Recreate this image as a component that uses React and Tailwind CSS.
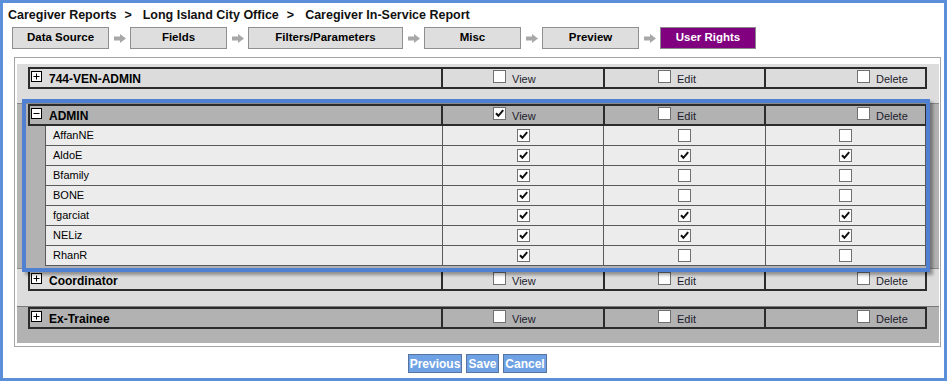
import React from "react";

const tabs = [
  { label: "Data Source", w: "w-[97px]" },
  { label: "Fields", w: "w-[97px]" },
  { label: "Filters/Parameters", w: "w-[155px]" },
  { label: "Misc", w: "w-[97px]" },
  { label: "Preview", w: "w-[97px]" },
  { label: "User Rights", w: "w-[96px]", active: true },
];

const users = [
  { name: "AffanNE", view: true, edit: false, del: false },
  { name: "AldoE", view: true, edit: true, del: true },
  { name: "Bfamily", view: true, edit: false, del: false },
  { name: "BONE", view: true, edit: false, del: false },
  { name: "fgarciat", view: true, edit: true, del: true },
  { name: "NELiz", view: true, edit: true, del: true },
  { name: "RhanR", view: true, edit: false, del: false },
];

const groups = [
  { name: "744-VEN-ADMIN", dark: false, open: false, view: false, cls: "pt-[3px] pb-[14px]" },
  { name: "ADMIN", dark: true, open: true, view: true, cls: "border-t border-[#8a8a8a] pb-[2px]" },
  { name: "Coordinator", dark: false, open: false, view: false, cls: "border-t border-[#8a8a8a] pb-[15px]" },
  { name: "Ex-Trainee", dark: true, open: false, view: false, cls: "border-t border-[#7a7a7a] pb-[14px]" },
];

const CheckBox = ({ checked }) => (
  <span className="w-[13px] h-[13px] border border-[#707070] bg-white flex items-center justify-center shrink-0">
    {checked && (
      <svg width="11" height="11" viewBox="0 0 11 11">
        <path d="M2 5.2 L4.4 7.8 L9.2 2.2" fill="none" stroke="#111" strokeWidth="2" />
      </svg>
    )}
  </span>
);

const Toggle = ({ open }) => (
  <span className="w-[11px] h-[11px] border border-black bg-white flex items-center justify-center shrink-0 mt-[2px]">
    <svg width="9" height="9" viewBox="0 0 9 9">
      <path d="M1.5 4.5 H7.5" stroke="#000" strokeWidth="1" />
      {!open && <path d="M4.5 1.5 V7.5" stroke="#000" strokeWidth="1" />}
    </svg>
  </span>
);

const Arrow = () => (
  <svg width="12" height="9" viewBox="0 0 12 9" className="mx-[4px]">
    <rect x="0" y="2.5" width="6" height="4" fill="#a8a8a8" />
    <path d="M6 0 L12 4.5 L6 9 Z" fill="#a8a8a8" />
  </svg>
);

const HeaderCell = ({ label, checked, cls }) => (
  <div className={`${cls} border-l-2 border-[#2b2b2b] flex items-start h-full`}>
    <span className="mt-[1px]">
      <CheckBox checked={checked} />
    </span>
    <span className="ml-[6px] text-[11px] leading-[18px] mt-[1px] text-[#1c1c2c]">{label}</span>
  </div>
);

const GroupRow = ({ g }) => (
  <div className={`${g.cls} ${g.dark ? "bg-[#b2b2b2]" : "bg-[#dcdcdc]"} pl-[11px]`}>
    <div className="w-[899px] h-[22px] border-2 border-[#2b2b2b] flex">
      <div className="w-[411px] flex items-start pl-[1px]">
        <Toggle open={g.open} />
        <span className="ml-[7px] text-[12px] font-bold leading-[18px] mt-[1px]">{g.name}</span>
      </div>
      <HeaderCell label="View" checked={g.view} cls="w-[162px] pl-[50px]" />
      <HeaderCell label="Edit" checked={false} cls="w-[161px] pl-[53px]" />
      <HeaderCell label="Delete" checked={false} cls="flex-1 pl-[91px]" />
    </div>
    {g.open &&
      users.map((u) => (
        <div key={u.name} className="flex h-[20px]">
          <div className="w-[17px]" />
          <div className="w-[397px] border-l border-b border-[#5a5a5a] bg-[#ececec] pl-[7px] text-[11px] leading-[14px] pt-[2px]">
            {u.name}
          </div>
          <div className="w-[161px] border-l border-b border-[#5a5a5a] bg-[#ececec] flex items-center justify-center">
            <CheckBox checked={u.view} />
          </div>
          <div className="w-[162px] border-l border-b border-[#5a5a5a] bg-[#ececec] flex items-center justify-center">
            <CheckBox checked={u.edit} />
          </div>
          <div className="w-[161px] border-l border-r border-b border-[#5a5a5a] bg-[#ececec] flex items-center justify-center">
            <CheckBox checked={u.del} />
          </div>
        </div>
      ))}
  </div>
);

export default function App() {
  return (
    <div className="relative w-[947px] h-[381px] border-[3px] border-[#5b8fd9] bg-white text-black font-['Liberation_Sans',Arial,sans-serif] overflow-hidden">
      <div className="pl-[5px] pt-[4px] h-[20px] flex items-center text-[12.5px] font-bold leading-[16px] text-[#111]">
        <span>Caregiver Reports</span>
        <span className="ml-[8px] mr-[11px]">&gt;</span>
        <span>Long Island City Office</span>
        <span className="ml-[8px] mr-[11px]">&gt;</span>
        <span>Caregiver In-Service Report</span>
      </div>

      <div className="mt-[4px] ml-[9px] flex items-center">
        {tabs.map((t, i) => (
          <React.Fragment key={t.label}>
            {i > 0 && (
              <span className="w-[21px] flex justify-center">
                <Arrow />
              </span>
            )}
            <div
              className={`${t.w} h-[22px] border flex items-center justify-center text-[11.5px] font-bold ${
                t.active ? "bg-[#800080] border-[#8a8a8a] text-white" : "bg-[#dedede] border-[#8f8f8f] text-black"
              }`}
            >
              {t.label}
            </div>
          </React.Fragment>
        ))}
      </div>

      <div className="mt-[8px] ml-[11px] w-[927px] h-[290px] border border-[#a4a4a4] pt-[6px] pl-[2px] pr-[1px] pb-[3px]">
        <div className="h-full bg-[#dcdcdc]">
          {groups.map((g) => (
            <GroupRow key={g.name} g={g} />
          ))}
        </div>
      </div>

      <div className="mt-[7px] ml-[11px] w-[927px] flex justify-center gap-[4px]">
        {[
          ["Previous", "w-[54px]"],
          ["Save", "w-[33px]"],
          ["Cancel", "w-[44px]"],
        ].map(([label, w]) => (
          <button
            key={label}
            className={`${w} h-[19px] bg-[#6fa2e4] border border-[#56749f] text-white text-[12px] font-bold leading-none flex items-center justify-center`}
          >
            {label}
          </button>
        ))}
      </div>

      <div className="absolute left-[19px] top-[96px] w-[908px] h-[173px] border-[4px] border-[#4f80d2] shadow-[3px_3px_3px_rgba(0,0,0,0.35)] pointer-events-none" />
    </div>
  );
}
